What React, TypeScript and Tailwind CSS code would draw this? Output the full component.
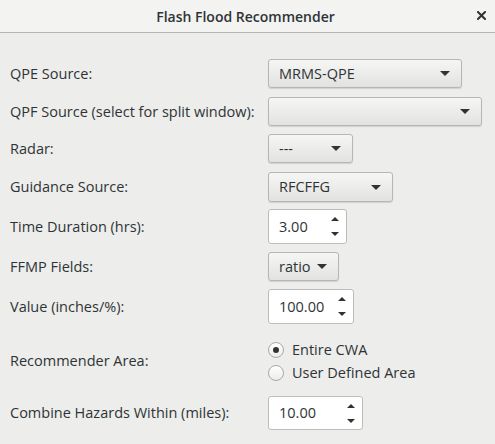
import React from "react";

const font = { fontFamily: '"Open Sans", "Noto Sans", sans-serif' };

function Arrow({ up = false, small = false }: { up?: boolean; small?: boolean }) {
  const w = small ? 8 : 10;
  const h = small ? 4 : 5;
  return (
    <svg width={w} height={h} viewBox={`0 0 ${w} ${h}`} className="block">
      {up ? (
        <polygon points={`0,${h} ${w / 2},0 ${w},${h}`} fill="#2e3436" />
      ) : (
        <polygon points={`0,0 ${w},0 ${w / 2},${h}`} fill="#2e3436" />
      )}
    </svg>
  );
}

function Combo({ value, width }: { value: string; width: string }) {
  return (
    <div
      className={`${width} h-full flex items-center justify-between pl-[10px] pr-[11px] rounded-[3px] border border-[#b6b6b3] bg-gradient-to-b from-[#f6f6f5] to-[#e2e2e0] shadow-[0_1px_1px_rgba(0,0,0,0.12)] text-[14.5px] text-[#2e3436]`}
    >
      <span>{value}</span>
      <Arrow />
    </div>
  );
}

function Spin({ value, width }: { value: string; width: string }) {
  return (
    <div
      className={`${width} h-full flex items-center justify-between pl-[10px] pr-[7px] rounded-[3px] border border-[#bdbdba] bg-white text-[14.5px] text-[#2e3436]`}
    >
      <span>{value}</span>
      <div className="flex flex-col gap-[11px]">
        <Arrow up small />
        <Arrow small />
      </div>
    </div>
  );
}

function Radio({ label, checked }: { label: string; checked?: boolean }) {
  return (
    <div className="flex items-center h-[23px]">
      <div className="w-[16px] h-[16px] rounded-full border border-[#a9a9a6] bg-gradient-to-b from-white to-[#ececea] flex items-center justify-center">
        {checked && <div className="w-[6px] h-[6px] rounded-full bg-[#2e3436]" />}
      </div>
      <span className="ml-[8px] text-[14.5px] text-[#2e3436]">{label}</span>
    </div>
  );
}

function Row({ label, className, children }: { label: string; className: string; children: React.ReactNode }) {
  return (
    <div className={`flex items-center ${className}`}>
      <div className="w-[258px] text-[14.5px] text-[#2e3436] whitespace-nowrap">{label}</div>
      <div className="h-full flex items-center">{children}</div>
    </div>
  );
}

export default function App() {
  return (
    <div style={font} className="w-[495px] h-[444px] bg-[#ededeb] flex flex-col overflow-hidden">
      <div className="h-[33px] shrink-0 bg-[#f3f3f2] border-b border-[#b5b5b2] flex items-center relative">
        <div className="flex-1 text-center text-[14px] font-semibold text-[#2e3436] pr-[4px]">Flash Flood Recommender</div>
        <svg width="9" height="9" viewBox="0 0 9 9" className="absolute right-[9px] top-[11px]">
          <path d="M1 1 L8 8 M8 1 L1 8" stroke="#2e3436" strokeWidth="2" strokeLinecap="square" />
        </svg>
      </div>
      <div className="flex flex-col pl-[10px] pt-[26px]">
        <Row label="QPE Source:" className="h-[29px]">
          <Combo value="MRMS-QPE" width="w-[194px]" />
        </Row>
        <Row label="QPF Source (select for split window):" className="h-[29px] mt-[9px]">
          <Combo value="" width="w-[214px]" />
        </Row>
        <Row label="Radar:" className="h-[29px] mt-[8px]">
          <Combo value="---" width="w-[85px]" />
        </Row>
        <Row label="Guidance Source:" className="h-[30px] mt-[9px]">
          <Combo value="RFCFFG" width="w-[125px]" />
        </Row>
        <Row label="Time Duration (hrs):" className="h-[35px] mt-[7px]">
          <Spin value="3.00" width="w-[79px]" />
        </Row>
        <Row label="FFMP Fields:" className="h-[29px] mt-[8px]">
          <Combo value="ratio" width="w-[71px]" />
        </Row>
        <Row label="Value (inches/%):" className="h-[35px] mt-[8px]">
          <Spin value="100.00" width="w-[86px]" />
        </Row>
        <Row label="Recommender Area:" className="h-[46px] mt-[14px]">
          <div className="flex flex-col">
            <Radio label="Entire CWA" checked />
            <Radio label="User Defined Area" />
          </div>
        </Row>
        <Row label="Combine Hazards Within (miles):" className="h-[34px] mt-[12px]">
          <Spin value="10.00" width="w-[95px]" />
        </Row>
      </div>
    </div>
  );
}
